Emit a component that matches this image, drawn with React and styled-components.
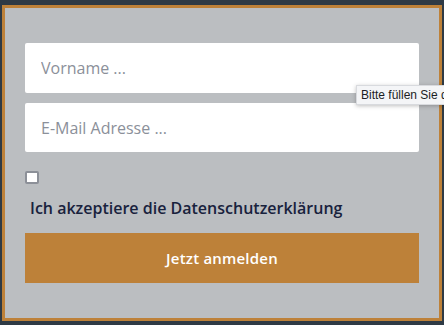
import styled, { createGlobalStyle } from "styled-components";

const GlobalStyle = createGlobalStyle`
  html, body {
    margin: 0;
    background-color: #2e3a45;
    overflow: hidden;
  }
  * {
    box-sizing: border-box;
  }
`;

const Page = styled.div`
  width: 444px;
  height: 325px;
  padding: 5px 2px 4px 2px;
  overflow: hidden;
  font-family: "Open Sans", "Liberation Sans", sans-serif;
`;

const FormBox = styled.form`
  position: relative;
  height: 316px;
  border: 3px solid #bd8139;
  background-color: #bbbec1;
  padding: 35px 20px;
  display: flex;
  flex-direction: column;
`;

const Field = styled.input`
  width: 100%;
  height: 50px;
  border: none;
  border-radius: 2px;
  background-color: #ffffff;
  padding: 0 16px;
  font-family: "Open Sans", "Liberation Sans", sans-serif;
  font-size: 16px;
  color: #333;
  margin-bottom: ${(p) => p.$gap || 0}px;
  outline: none;

  &::placeholder {
    color: #8b909a;
  }
`;

const Check = styled.span`
  display: block;
  width: 14px;
  height: 13px;
  margin-top: 19px;
  border: 2px solid #8c9098;
  border-radius: 2px;
  background-color: #ffffff;
`;

const Label = styled.label`
  display: block;
  margin: 14px 0 0 5px;
  font-size: 16px;
  font-weight: 600;
  color: #18223d;
  line-height: 20px;
`;

const Submit = styled.button`
  margin-top: 15px;
  width: 100%;
  height: 50px;
  border: none;
  background-color: #bd8139;
  color: #ffffff;
  font-family: "Open Sans", "Liberation Sans", sans-serif;
  font-size: 15px;
  font-weight: 600;
  letter-spacing: 0.2px;
`;

const Tooltip = styled.div`
  position: absolute;
  left: 351px;
  top: 77px;
  width: 90px;
  overflow: hidden;
  white-space: nowrap;
  padding: 3px 4px;
  background-color: #f4f5f7;
  border: 1px solid #d8dade;
  box-shadow: 0 1px 4px rgba(0, 0, 0, 0.25);
  font-family: "Liberation Sans", sans-serif;
  font-size: 12px;
  line-height: 12px;
  color: #1b1e24;
`;

export default function App() {
  return (
    <>
      <GlobalStyle />
      <Page>
        <FormBox onSubmit={(e) => e.preventDefault()}>
          <Field type="text" placeholder="Vorname ..." $gap={10} />
          <Field type="email" placeholder="E-Mail Adresse ..." />
          <Check />
          <Label>Ich akzeptiere die Datenschutzerklärung</Label>
          <Submit type="submit">Jetzt anmelden</Submit>
          <Tooltip>Bitte füllen Sie d</Tooltip>
        </FormBox>
      </Page>
    </>
  );
}
